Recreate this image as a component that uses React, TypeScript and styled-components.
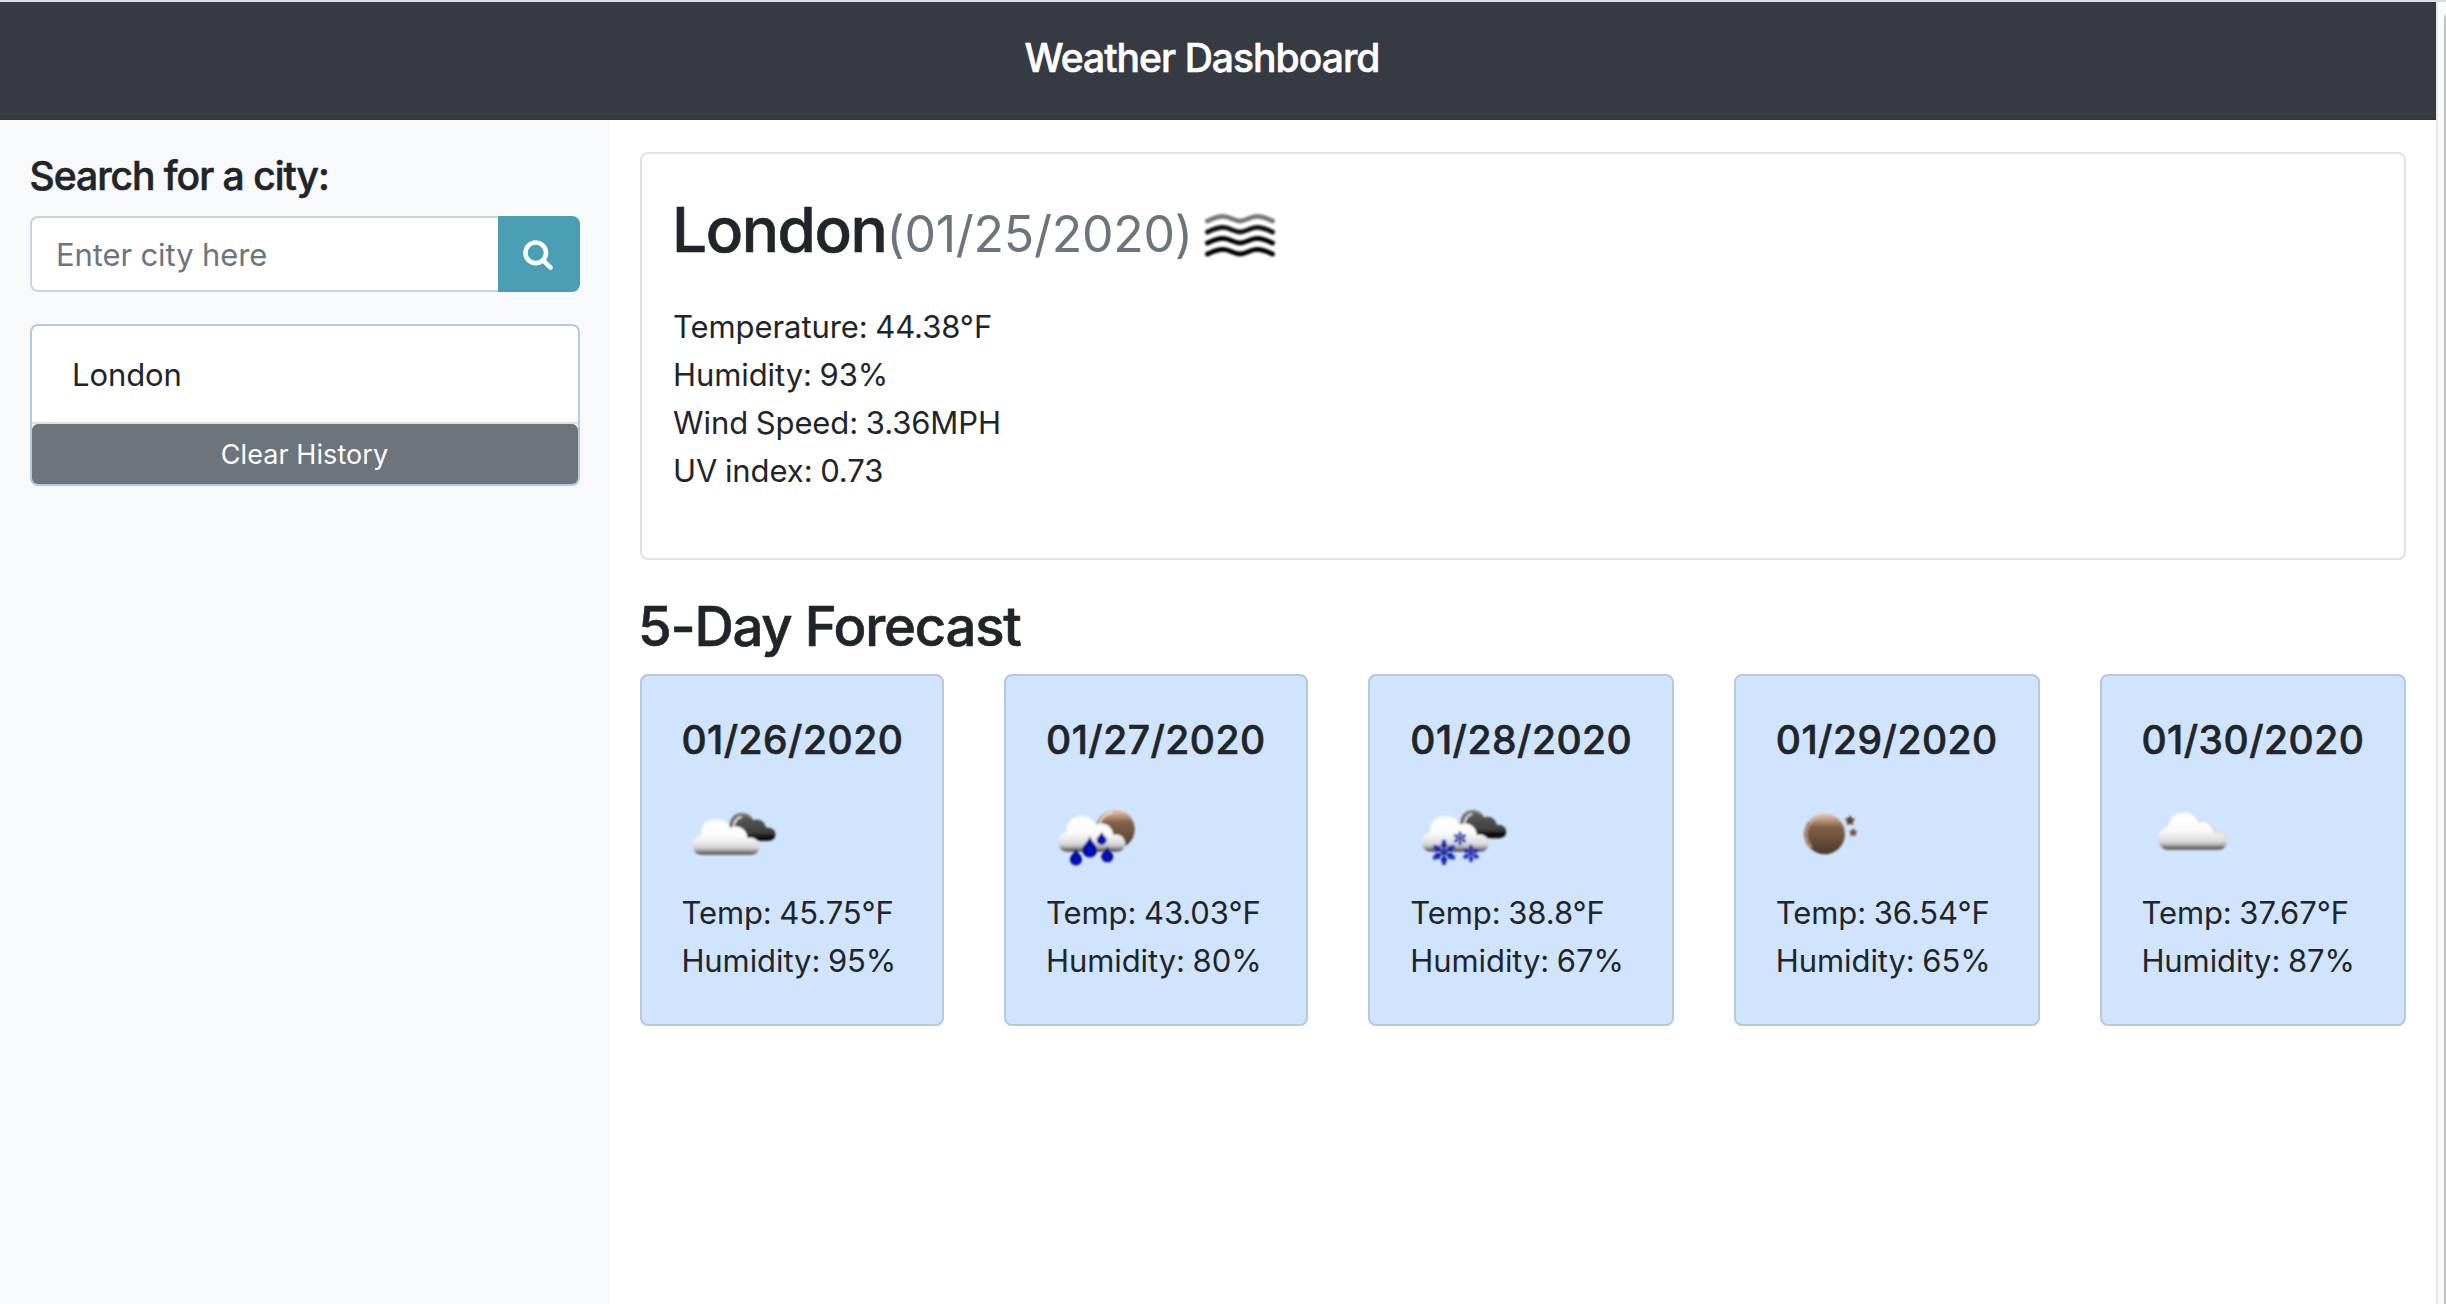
import React from "react";
import styled, { createGlobalStyle, css } from "styled-components";

const GlobalStyle = createGlobalStyle`
  *, *::before, *::after { box-sizing: border-box; }
  body {
    margin: 0;
    background: #fff;
    color: #212529;
    font-family: Inter, "Liberation Sans", sans-serif;
    font-size: 31px;
    letter-spacing: -0.1px;
    overflow: hidden;
  }
  h1, h2, h3, p { margin: 0; padding: 0; font-weight: inherit; }
`;

const headingFace = css`
  font-weight: 500;
  -webkit-text-stroke: 0.6px currentColor;
`;

const Window = styled.div`
  display: flex;
  height: 1304px;
  border-top: 2px solid #dadce3;
`;

const Page = styled.div`
  flex: 1;
  display: flex;
  flex-direction: column;
`;

const ScrollTrack = styled.div`
  width: 10px;
  padding: 9px 0 0 6px;
  border-left: 2px solid #e8e8e8;
  background: #fafafa;
  overflow: hidden;
`;

const ScrollThumb = styled.div`
  width: 16px;
  height: 1400px;
  border-radius: 8px;
  background: #c1c1c1;
`;

const Header = styled.header`
  display: flex;
  justify-content: center;
  height: 118px;
  padding: 32px 32px 0 0;
  background: #363a42;
  border-bottom: 1px solid #2f3339;
`;

const Brand = styled.h1`
  ${headingFace}
  color: #fff;
  font-size: 39px;
  line-height: 48px;
  letter-spacing: -0.95px;
`;

const Body = styled.div`
  flex: 1;
  display: flex;
`;

const Sidebar = styled.aside`
  display: flex;
  flex-direction: column;
  width: 610px;
  padding: 32px 30px;
  background: #f8f9fb;
`;

const SearchLabel = styled.h3`
  ${headingFace}
  margin: 0 0 16px -0.5px;
  font-size: 39px;
  line-height: 48px;
  letter-spacing: -1px;
`;

const SearchGroup = styled.div`
  display: flex;
  height: 76px;
  margin-bottom: 32px;
`;

const SearchInput = styled.input`
  flex: 1;
  min-width: 0;
  padding: 0 24px;
  border: 2px solid #ced3db;
  border-right: 0;
  border-radius: 8px 0 0 8px;
  background: #fff;
  font: inherit;
  letter-spacing: -0.12px;
  outline: none;
  &::placeholder { color: #6c757d; opacity: 1; }
`;

const SearchButton = styled.button`
  display: flex;
  align-items: center;
  justify-content: center;
  width: 82px;
  padding: 0 2px 0 0;
  border: 0;
  border-radius: 0 8px 8px 0;
  background: #4a9fb5;
  color: #fff;
`;

const SearchGlyph = styled.svg`
  width: 32px;
  height: 32px;
  fill: currentColor;
`;

const History = styled.div`
  display: flex;
  flex-direction: column;
  border: 2px solid #b5c9e2;
  border-radius: 8px;
  background: #fff;
`;

const HistoryItem = styled.div`
  height: 98px;
  padding: 1px 40px 0;
  border-bottom: 2px solid #dfdfdf;
  line-height: 96px;
`;

const ClearButton = styled.button`
  height: 60px;
  padding: 1px 1px 0 0;
  border: 0;
  border-radius: 6px;
  background: #6d747c;
  color: #fff;
  font-family: inherit;
  font-size: 27px;
  line-height: 60px;
  letter-spacing: 0.07px;
`;

const Main = styled.main`
  flex: 1;
  padding: 32px 30px;
`;

const CurrentCard = styled.section`
  height: 408px;
  padding: 32px 31px;
  border: 2px solid #dee2e6;
  border-radius: 8px;
`;

const CurrentHeading = styled.div`
  display: flex;
  align-items: baseline;
  height: 88px;
  margin: 0 0 29px -1px;
  line-height: 88px;
`;

const CityName = styled.h2`
  ${headingFace}
  font-size: 62px;
  letter-spacing: -1.4px;
`;

const CurrentDate = styled.span`
  color: #6c757d;
  font-size: 50px;
  letter-spacing: -0.25px;
`;

const FogImage = styled.svg`
  align-self: flex-start;
  width: 100px;
  height: 100px;
  margin: -1px 0 0 -3px;
`;

const Stat = styled.p`
  line-height: 48px;
  letter-spacing: -0.08px;
  word-spacing: -1px;
  white-space: nowrap;
`;

const ForecastTitle = styled.h2`
  ${headingFace}
  margin: 32px 0 14px -2px;
  font-size: 54.5px;
  line-height: 68px;
  letter-spacing: -1.25px;
`;

const ForecastGrid = styled.div`
  display: grid;
  grid-template-columns: 304px 304px 306px 306px 306px;
  column-gap: 60px;
`;

const DayCard = styled.article<{ $inset: number }>`
  height: 352px;
  padding: 40px 0 0 ${(p) => p.$inset}px;
  border: 2px solid #b5c8de;
  border-radius: 8px;
  background: #d0e4fd;
`;

const DayDate = styled.h3`
  ${headingFace}
  margin-bottom: 20px;
  font-size: 39px;
  line-height: 48px;
  letter-spacing: 0.47px;
`;

const WeatherImage = styled.svg`
  display: block;
  width: 100px;
  height: 100px;
  margin: 0 0 5px 0.5px;
  overflow: visible;
`;

const CLOUD =
  "M21 71C14.5 71 10.5 67 10.5 61C10.5 56 14 52.3 19 51.3C18.5 41 25 34.5 33.5 34.5C41 34.5 45.8 38 48 44C56 40 65 45 65.5 54C72 52 77.5 57 77.5 62.5C77.5 67.5 73 71 68 71Z";
const DARK_CLOUD =
  "M62 57L48 46C47 36 52 29 60 29C66 29 69.5 32 71 36C78 34 83 38 84 43.5C90 43 93.5 46.5 93.5 50.3C93.5 54.5 90 57 86 57Z";
const BIG_CLOUD =
  "M26 66C20 66 16 60 16 54.5C16 48 21 43.5 26.5 42C28 33 34 27.7 41 27.7C48 27.7 53 31.5 56 38C63 35 71 40 72.5 48.5C79 46.5 85 51 85 57C85 63 80 66 77 66Z";

function Defs({ id }: { id: string }) {
  return (
    <defs>
      <filter id={`${id}-soft`} x="-10%" y="-10%" width="120%" height="120%">
        <feGaussianBlur stdDeviation="0.9" />
      </filter>
      <linearGradient id={`${id}-white`} x1="0" y1="0" x2="0" y2="1">
        <stop offset="0" stopColor="#f1f2f4" />
        <stop offset="0.14" stopColor="#fff" />
        <stop offset="0.5" stopColor="#fafafa" />
        <stop offset="0.78" stopColor="#d9d9d9" />
        <stop offset="0.88" stopColor="#a6a6a6" />
        <stop offset="0.94" stopColor="#606060" />
        <stop offset="1" stopColor="#707070" />
      </linearGradient>
      <linearGradient id={`${id}-dark`} x1="0" y1="0" x2="0" y2="1">
        <stop offset="0" stopColor="#707070" />
        <stop offset="0.25" stopColor="#555" />
        <stop offset="0.7" stopColor="#3e3e3e" />
        <stop offset="0.9" stopColor="#050505" />
        <stop offset="1" stopColor="#222" />
      </linearGradient>
      <linearGradient id={`${id}-moon`} x1="0" y1="0" x2="0" y2="1">
        <stop offset="0" stopColor="#e0cbbb" />
        <stop offset="0.14" stopColor="#c39d82" />
        <stop offset="0.32" stopColor="#84624b" />
        <stop offset="0.65" stopColor="#6a4e3a" />
        <stop offset="1" stopColor="#4a3729" />
      </linearGradient>
      <radialGradient id={`${id}-drop`} cx="0.5" cy="0.65" r="0.5">
        <stop offset="0" stopColor="#0018d8" />
        <stop offset="0.6" stopColor="#0008a8" />
        <stop offset="1" stopColor="#000068" />
      </radialGradient>
      <linearGradient id={`${id}-flake`} x1="0" y1="0" x2="0" y2="1">
        <stop offset="0" stopColor="#2a44d6" />
        <stop offset="0.5" stopColor="#1220a8" />
        <stop offset="1" stopColor="#3240a8" />
      </linearGradient>
    </defs>
  );
}

const DarkCloud = ({ id }: { id: string }) => (
  <g>
    <path d={DARK_CLOUD} fill={`url(#${id}-dark)`} />
    <path d="M48 44C47.5 36 52 29.5 59.5 29.5C63 29.5 66 30.8 68 33" fill="none" stroke="#8b8b8b" strokeWidth="1.6" />
    <path d="M51.5 44C51.5 38 54 34.2 59.5 32.6" fill="none" stroke="#d8d8d8" strokeWidth="2.2" />
  </g>
);

const Drop = ({ id, x, top, h, r }: { id: string; x: number; top: number; h: number; r: number }) => (
  <path
    d={`M${x} ${top}C${x + r * 0.2} ${top + h * 0.3} ${x + r} ${top + h * 0.4} ${x + r} ${top + h - r}A${r} ${r} 0 0 1 ${x - r} ${top + h - r}C${x - r} ${top + h * 0.4} ${x - r * 0.2} ${top + h * 0.3} ${x} ${top}Z`}
    fill={`url(#${id}-drop)`}
  />
);

const Flake = ({ id, x, y, r }: { id: string; x: number; y: number; r: number }) => (
  <g transform={`translate(${x} ${y})`} fill={`url(#${id}-flake)`}>
    {[0, 60, 120, 180, 240, 300].map((angle) => (
      <path
        key={angle}
        transform={`rotate(${angle}) scale(${r / 12})`}
        d="M-1 0L-1.2 -4L-3.3 -7L-2.8 -8.6L-2.1 -8.4L-2.1 -11.4Q0 -13 2.1 -11.4L2.1 -8.4L2.8 -8.6L3.3 -7L1.2 -4L1 0Z"
      />
    ))}
    <circle r={r * 0.17} />
  </g>
);

const star = (cx: number, cy: number, r: number) =>
  Array.from({ length: 10 }, (_, i) => {
    const radius = i % 2 ? r * 0.55 : r;
    const a = (Math.PI / 5) * i - Math.PI / 2;
    return `${(cx + radius * Math.cos(a)).toFixed(2)},${(cy + radius * Math.sin(a)).toFixed(2)}`;
  }).join(" ");

type Weather = "clouds" | "rain" | "snow" | "clear" | "cloud";

function WeatherIcon({ kind }: { kind: Weather }) {
  const soft = `url(#${kind}-soft)`;
  const white = `url(#${kind}-white)`;
  return (
    <WeatherImage viewBox="0 0 100 100">
      <Defs id={kind} />
      <g filter={soft}>
        {kind === "clouds" && (
          <>
            <DarkCloud id={kind} />
            <path d={CLOUD} fill={white} />
          </>
        )}
        {kind === "rain" && (
          <>
            <circle cx="68.3" cy="45.3" r="19.5" fill="url(#rain-moon)" />
            <path d="M51.5 42A17 17 0 0 1 66 28.5" fill="none" stroke="#e8d9ce" strokeWidth="2" />
            <path d={CLOUD} transform="translate(0.7 -3)" fill={white} />
            <Drop id={kind} x={29} top={64} h={17.5} r={6} />
            <Drop id={kind} x={42.8} top={52} h={21.5} r={7.5} />
            <Drop id={kind} x={54.7} top={47.5} h={13.5} r={4.9} />
            <Drop id={kind} x={60.3} top={62} h={16.5} r={6} />
          </>
        )}
        {kind === "snow" && (
          <>
            <g transform="translate(1.8 -2.8)">
              <DarkCloud id={kind} />
            </g>
            <path d={CLOUD} transform="translate(0.3 -3)" fill={white} />
            <Flake id={kind} x={33} y={68.3} r={12.5} />
            <Flake id={kind} x={49} y={54.3} r={7} />
            <Flake id={kind} x={60} y={69.5} r={8.8} />
          </>
        )}
        {kind === "clear" && (
          <>
            <circle cx="48.7" cy="49.9" r="20.3" fill="url(#clear-moon)" />
            <path d="M35.5 63A18 18 0 0 1 50 32.3" fill="none" stroke="#d3b59d" strokeWidth="2" opacity="0.8" />
            <path d="M33.4 62.5A19.3 19.3 0 0 1 33 38.5" fill="none" stroke="#8a654c" strokeWidth="1.4" />
            <polygon points={star(74, 36.6, 5.6)} fill="#65452f" />
            <polygon points={star(77.2, 48.6, 4.6)} fill="#785038" />
          </>
        )}
        {kind === "cloud" && (
          <>
            <path d={BIG_CLOUD} fill={white} />
            <path d="M56 38C63 35 71 40 72.5 48.5C79 46.5 84 51 84.5 56" fill="none" stroke="#d8d8da" strokeWidth="1.4" />
          </>
        )}
      </g>
    </WeatherImage>
  );
}

const FogIcon = () => (
  <FogImage viewBox="0 0 100 100">
    <defs>
      <filter id="fog-soft" x="-10%" y="-30%" width="120%" height="160%">
        <feGaussianBlur stdDeviation="1.1" />
      </filter>
    </defs>
    <g filter="url(#fog-soft)" fill="none" strokeWidth="4.8" strokeLinecap="round">
      {[
        { y: 36, color: "#777" },
        { y: 47, color: "#101010" },
        { y: 58, color: "#050505" },
        { y: 69, color: "#000" },
      ].map(({ y, color }) => (
        <path
          key={y}
          stroke={color}
          d={`M17.5 ${y}C22 ${y - 2} 27 ${y - 4.6} 33 ${y - 4.6}C40 ${y - 4.6} 44 ${y} 50 ${y}C56 ${y} 60 ${y - 4.6} 67 ${y - 4.6}C73 ${y - 4.6} 78 ${y - 2} 82.5 ${y}`}
        />
      ))}
    </g>
  </FogImage>
);

const SearchIcon = () => (
  <SearchGlyph viewBox="0 0 1792 1792">
    <path d="M1216 832q0-185-131.500-316.500T768 384 451.500 515.500 320 832t131.500 316.500T768 1280t316.500-131.500T1216 832zm512 832q0 52-38 90t-90 38q-54 0-90-38l-343-342q-179 124-399 124-143 0-273.500-55.500t-225-150-150-225T64 832t55.500-273.500 150-225 225-150T768 128t273.500 55.500 225 150 150 225T1472 832q0 220-124 399l343 343q37 37 37 90z" />
  </SearchGlyph>
);

const currentStats = ["Temperature: 44.38°F", "Humidity: 93%", "Wind Speed: 3.36MPH", "UV index: 0.73"];

const forecast: { date: string; kind: Weather; temp: string; humidity: string; inset: number }[] = [
  { date: "01/26/2020", kind: "clouds", temp: "45.75", humidity: "95", inset: 39.4 },
  { date: "01/27/2020", kind: "rain", temp: "43.03", humidity: "80", inset: 40 },
  { date: "01/28/2020", kind: "snow", temp: "38.8", humidity: "67", inset: 40.3 },
  { date: "01/29/2020", kind: "clear", temp: "36.54", humidity: "65", inset: 39.8 },
  { date: "01/30/2020", kind: "cloud", temp: "37.67", humidity: "87", inset: 39.4 },
];

export default function App() {
  return (
    <>
      <GlobalStyle />
      <Window>
        <Page>
          <Header>
            <Brand>Weather Dashboard</Brand>
          </Header>
          <Body>
            <Sidebar>
              <SearchLabel>Search for a city:</SearchLabel>
              <SearchGroup>
                <SearchInput placeholder="Enter city here" />
                <SearchButton aria-label="Search">
                  <SearchIcon />
                </SearchButton>
              </SearchGroup>
              <History>
                <HistoryItem>London</HistoryItem>
                <ClearButton>Clear History</ClearButton>
              </History>
            </Sidebar>
            <Main>
              <CurrentCard>
                <CurrentHeading>
                  <CityName>London</CityName>
                  <CurrentDate>(01/25/2020)</CurrentDate>
                  <FogIcon />
                </CurrentHeading>
                {currentStats.map((line) => (
                  <Stat key={line}>{line}</Stat>
                ))}
              </CurrentCard>
              <ForecastTitle>5-Day Forecast</ForecastTitle>
              <ForecastGrid>
                {forecast.map((day) => (
                  <DayCard key={day.date} $inset={day.inset}>
                    <DayDate>{day.date}</DayDate>
                    <WeatherIcon kind={day.kind} />
                    <Stat>Temp: {day.temp}°F</Stat>
                    <Stat>Humidity: {day.humidity}%</Stat>
                  </DayCard>
                ))}
              </ForecastGrid>
            </Main>
          </Body>
        </Page>
        <ScrollTrack>
          <ScrollThumb />
        </ScrollTrack>
      </Window>
    </>
  );
}
